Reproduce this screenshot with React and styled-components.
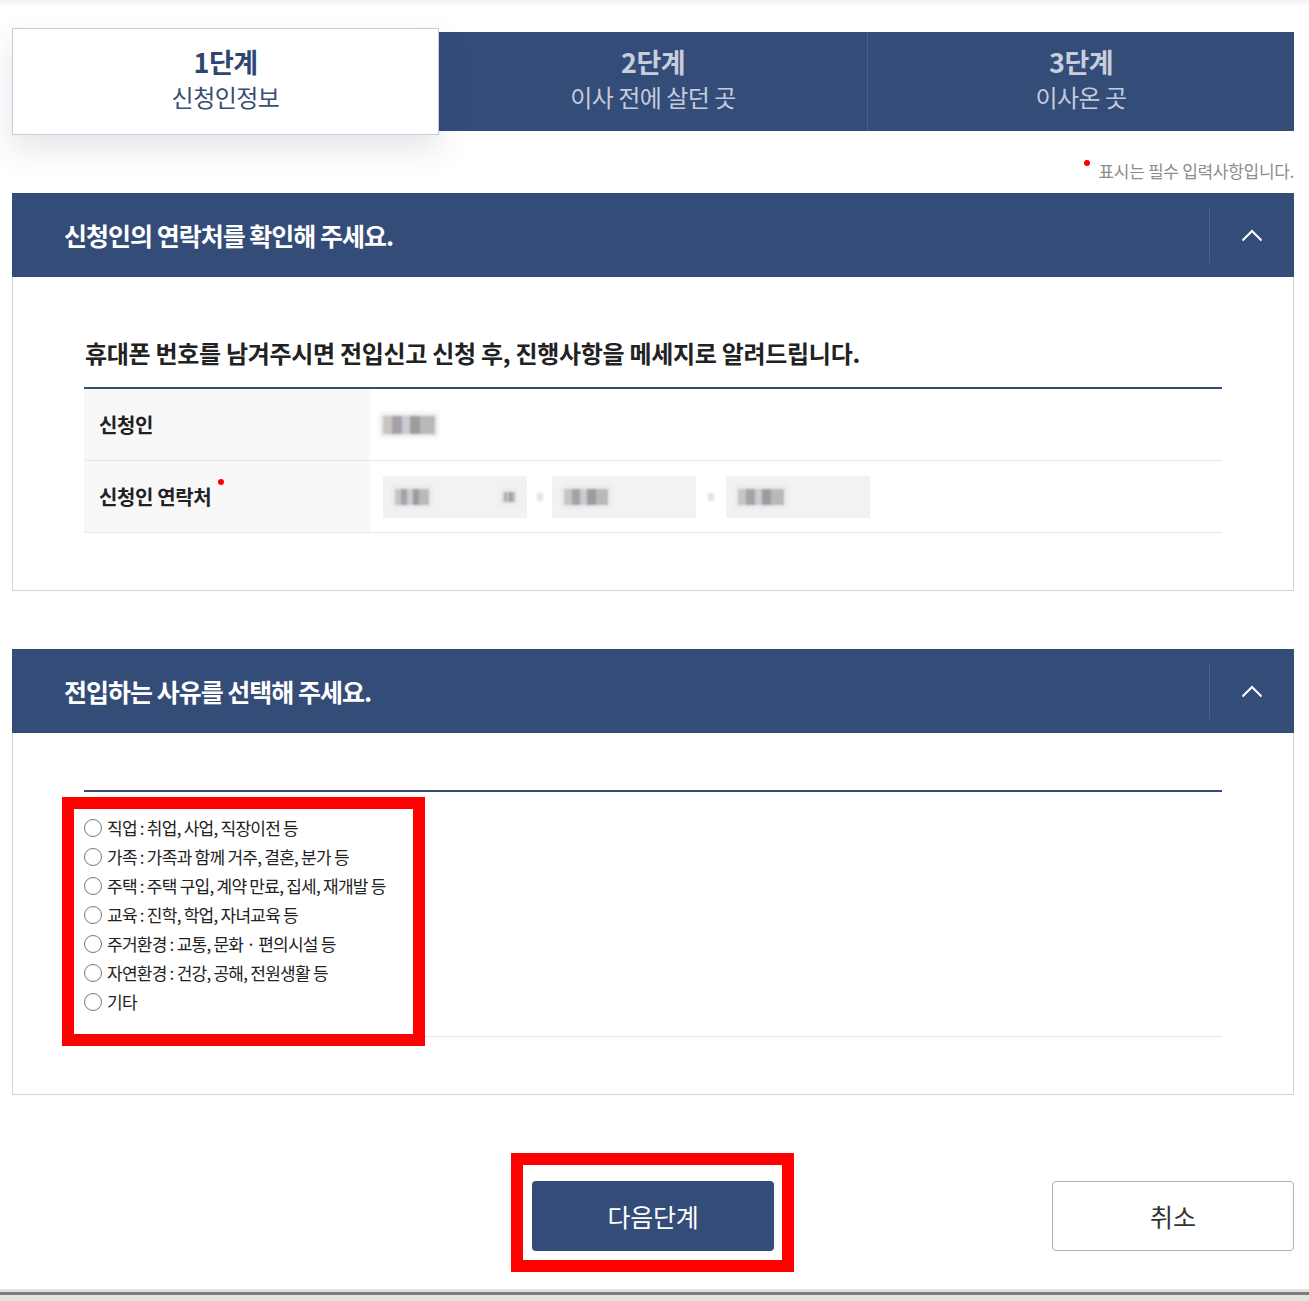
// Packages
import React from "react"
import styled, { createGlobalStyle } from "styled-components"

// Values
const Navy = "#344c78"
const Font = `"Noto Sans CJK KR", "Noto Sans", sans-serif`

// Data
const Steps = [
    { num: "1단계", name: "신청인정보", active: true },
    { num: "2단계", name: "이사 전에 살던 곳" },
    { num: "3단계", name: "이사온 곳", divider: true },
]

const Reasons = [
    "직업 : 취업, 사업, 직장이전 등",
    "가족 : 가족과 함께 거주, 결혼, 분가 등",
    "주택 : 주택 구입, 계약 만료, 집세, 재개발 등",
    "교육 : 진학, 학업, 자녀교육 등",
    "주거환경 : 교통, 문화 · 편의시설 등",
    "자연환경 : 건강, 공해, 전원생활 등",
    "기타",
]

// Styles
const GlobalStyle = createGlobalStyle`
    body {
        margin: 0;
        background: linear-gradient(#f1f1f1, #fff 6px) no-repeat #fff;
        font-family: ${Font};
    }
`

const Page = styled.div`
    padding: 28px 15px 0 12px;
`

const StepList = styled.ol`
    list-style: none;
    margin: 0;
    padding: 0;
    display: grid;
    grid-template-columns: 427px 428px 427px;
    align-items: center;
`

const Step = styled.li`
    position: relative;
    z-index: ${p => (p.$active ? 2 : 1)};
    box-sizing: border-box;
    height: ${p => (p.$active ? "107px" : "99px")};
    padding-bottom: 6px;
    display: flex;
    flex-direction: column;
    align-items: center;
    justify-content: center;
    background: ${p => (p.$active ? "#fff" : Navy)};
    border: ${p => (p.$active ? "1px solid #c6ccda" : "none")};
    border-left: ${p => (p.$divider ? "1px solid #4a5f88" : "")};
    box-shadow: ${p => (p.$active ? "0 14px 30px rgba(40, 52, 80, 0.13)" : "none")};
    color: ${p => (p.$active ? "#2f4672" : "#c7cedd")};
`

const StepNum = styled.strong`
    font-size: 27px;
    line-height: 35px;
    font-weight: 700;
    letter-spacing: -0.6px;
`

const StepName = styled.span`
    font-size: 24px;
    line-height: 35px;
    letter-spacing: -0.5px;
    color: ${p => (p.$active ? "#3a4d72" : "#c3cbdb")};
`

const Note = styled.p`
    margin: 26px 0 12px;
    text-align: right;
    font-size: 17px;
    line-height: 20px;
    color: #8c8c8c;
    letter-spacing: -0.3px;

    &::before {
        content: "";
        display: inline-block;
        width: 6px;
        height: 6px;
        border-radius: 50%;
        background: #f00;
        margin-right: 8px;
        position: relative;
        top: -12px;
    }
`

const Panel = styled.section`
    & + & {
        margin-top: 58px;
    }
`

const PanelHead = styled.div`
    height: 84px;
    display: flex;
    align-items: center;
    padding-left: 52px;
    background: ${Navy};
`

const PanelTitle = styled.h2`
    flex: 1;
    margin: 0;
    color: #fff;
    font-size: 25px;
    font-weight: 700;
    letter-spacing: -1px;
`

const Toggle = styled.button`
    width: 85px;
    height: 56px;
    padding: 0;
    border: none;
    border-left: 1px solid #4b608b;
    background: none;
    display: flex;
    align-items: center;
    justify-content: center;
`

const PanelBody = styled.div`
    border: 1px solid #d4d4d4;
    border-top: none;
    padding: ${p => p.$top}px 71px 57px;
`

const Lead = styled.h3`
    margin: 0 0 18px 1px;
    font-size: 24px;
    line-height: 32px;
    font-weight: 700;
    color: #222;
    letter-spacing: -0.3px;
`

const Table = styled.div`
    border-top: 2px solid ${Navy};
`

const Row = styled.div`
    display: grid;
    grid-template-columns: 286px 1fr;
    height: 72px;
    box-sizing: border-box;
    border-bottom: 1px solid #e6e6e6;
`

const Th = styled.div`
    display: flex;
    align-items: center;
    padding-left: 15px;
    background: #f8f8f8;
    font-size: 20px;
    font-weight: 700;
    color: #222;
    letter-spacing: -0.4px;
`

const Required = styled.span`
    position: relative;

    &::after {
        content: "";
        position: absolute;
        right: -13px;
        top: -3px;
        width: 6px;
        height: 6px;
        border-radius: 50%;
        background: #f00;
    }
`

const Td = styled.div`
    display: flex;
    align-items: center;
    padding-left: 13px;
`

const Field = styled.div`
    box-sizing: border-box;
    width: 144px;
    height: 42px;
    padding: 0 12px;
    display: flex;
    align-items: center;
    justify-content: space-between;
    background: #f2f2f2;
`

const Dash = styled.span`
    width: ${p => p.$w}px;
    display: flex;
    justify-content: center;

    &::before {
        content: "";
        width: 6px;
        height: 8px;
        background: #e2e2e2;
        filter: blur(1px);
    }
`

const Mosaic = styled.span`
    display: inline-block;
    width: ${p => p.$w}px;
    height: ${p => p.$h}px;
    background: linear-gradient(
        90deg,
        #c9c4c1 0 18%,
        #a3a3a7 18% 36%,
        #c9ccd4 36% 52%,
        #9e9c9b 52% 72%,
        #b9b9bb 72%
    );
    box-shadow: 0 0 4px 3px #e9e9e9;
    filter: blur(1.2px);
`

const ChoiceRow = styled.div`
    position: relative;
    padding: 21px 0 20px;
    border-top: 2px solid ${Navy};
    border-bottom: 1px solid #e6e6e6;

    &::after {
        content: "";
        position: absolute;
        left: -22px;
        top: 5px;
        width: 363px;
        height: 249px;
        box-sizing: border-box;
        border: 12px solid #f00;
        pointer-events: none;
    }
`

const Choice = styled.label`
    display: flex;
    align-items: center;
    gap: 5px;
    height: 29px;
    font-size: 17px;
    color: #222;
    letter-spacing: -0.75px;
`

const Circle = styled.span`
    box-sizing: border-box;
    width: 18px;
    height: 18px;
    border: 1.5px solid #777;
    border-radius: 50%;
    flex: none;
`

const Actions = styled.div`
    margin-top: 86px;
    display: grid;
    grid-template-columns: 1fr auto 1fr;
    align-items: center;
`

const Button = styled.button`
    position: relative;
    width: 242px;
    height: 70px;
    border-radius: 4px;
    font-family: ${Font};
    font-size: 25px;
    letter-spacing: ${p => (p.$primary ? "-0.2px" : "0")};
    cursor: pointer;
    background: ${p => (p.$primary ? Navy : "#fff")};
    color: ${p => (p.$primary ? "#fff" : "#333")};
    border: ${p => (p.$primary ? "none" : "1px solid #b2b2b2")};
    grid-column: ${p => (p.$primary ? 2 : 3)};
    justify-self: ${p => (p.$primary ? "center" : "end")};

    &::after {
        content: ${p => (p.$marked ? '""' : "none")};
        position: absolute;
        inset: -28px -20px -21px -21px;
        border: 12px solid #f00;
        pointer-events: none;
    }
`

const Footer = styled.div`
    margin-top: 38px;
    height: 12px;
    background: linear-gradient(#e1e1e1 0 3px, #7b7b7b 3px 6px, #e4e3dc 6px);
`

function Chevron() {
    return (
        <svg width="22" height="13" viewBox="0 0 22 13" fill="none">
            <polyline points="1.5,11.5 11,2 20.5,11.5" stroke="#fff" strokeWidth="2" />
        </svg>
    )
}

function App() {
    return (
        <>
            <GlobalStyle />
            <Page>
                <StepList>
                    {Steps.map(step => (
                        <Step key={step.num} $active={step.active} $divider={step.divider}>
                            <StepNum>{step.num}</StepNum>
                            <StepName $active={step.active}>{step.name}</StepName>
                        </Step>
                    ))}
                </StepList>

                <Note>표시는 필수 입력사항입니다.</Note>

                <Panel>
                    <PanelHead>
                        <PanelTitle>신청인의 연락처를 확인해 주세요.</PanelTitle>
                        <Toggle aria-label="접기">
                            <Chevron />
                        </Toggle>
                    </PanelHead>
                    <PanelBody $top={60}>
                        <Lead>휴대폰 번호를 남겨주시면 전입신고 신청 후, 진행사항을 메세지로 알려드립니다.</Lead>
                        <Table>
                            <Row>
                                <Th>신청인</Th>
                                <Td>
                                    <Mosaic $w={52} $h={18} />
                                </Td>
                            </Row>
                            <Row>
                                <Th>
                                    <Required>신청인 연락처</Required>
                                </Th>
                                <Td>
                                    <Field>
                                        <Mosaic $w={34} $h={16} />
                                        <Mosaic $w={12} $h={10} />
                                    </Field>
                                    <Dash $w={25} />
                                    <Field>
                                        <Mosaic $w={44} $h={16} />
                                    </Field>
                                    <Dash $w={30} />
                                    <Field>
                                        <Mosaic $w={46} $h={16} />
                                    </Field>
                                </Td>
                            </Row>
                        </Table>
                    </PanelBody>
                </Panel>

                <Panel>
                    <PanelHead>
                        <PanelTitle>전입하는 사유를 선택해 주세요.</PanelTitle>
                        <Toggle aria-label="접기">
                            <Chevron />
                        </Toggle>
                    </PanelHead>
                    <PanelBody $top={57}>
                        <ChoiceRow>
                            {Reasons.map(reason => (
                                <Choice key={reason}>
                                    <Circle />
                                    {reason}
                                </Choice>
                            ))}
                        </ChoiceRow>
                    </PanelBody>
                </Panel>

                <Actions>
                    <Button $primary $marked>
                        다음단계
                    </Button>
                    <Button>취소</Button>
                </Actions>
            </Page>
            <Footer />
        </>
    )
}

export default App
